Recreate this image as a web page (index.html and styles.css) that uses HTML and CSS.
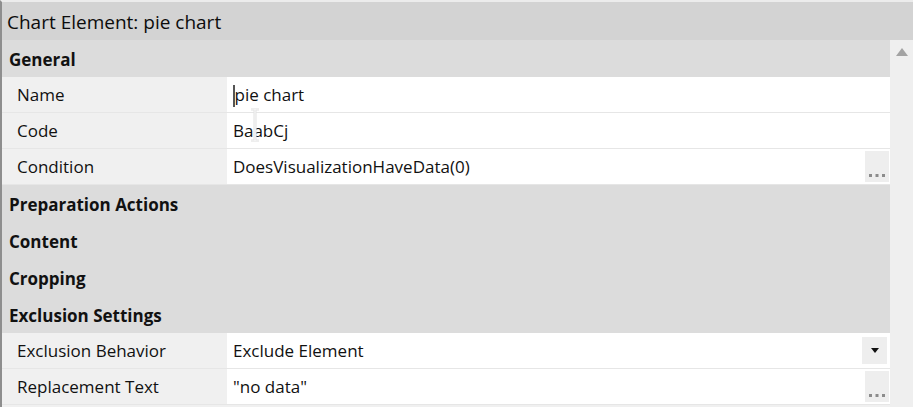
FILE: index.html
```html
<!DOCTYPE html>
<html lang="en">
<head>
    <meta charset="UTF-8">
    <title>Chart Element: pie chart</title>
    <link rel="stylesheet" href="styles.css">
</head>
<body>
    <div class="panel">
        <div class="title">Chart Element: pie chart</div>
        <div class="body">
            <div class="grid">
                <div class="section">General</div>
                <div class="row">
                    <div class="label">Name</div>
                    <div class="value"><span class="caret"></span>pie chart</div>
                </div>
                <div class="row">
                    <div class="label">Code</div>
                    <div class="value">BaabCj
                        <!-- mouse I-beam over the text -->
                        <svg class="ibeam" width="12" height="34" viewBox="0 0 12 34">
                            <path d="M2 1h8M2 33h8M6 1v32" stroke="#e2e2e2" stroke-width="3" fill="none"/>
                            <path d="M2 1h8M2 33h8M6 1v32" stroke="#fafafa" stroke-width="1" fill="none"/>
                        </svg>
                    </div>
                </div>
                <div class="row">
                    <div class="label">Condition</div>
                    <div class="value">DoesVisualizationHaveData(0)
                        <span class="btn-dots">
                            <svg width="18" height="4" viewBox="0 0 18 4">
                                <rect x="1" y="1" width="3" height="3" fill="#8c8c8c"/>
                                <rect x="7.5" y="1" width="3" height="3" fill="#8c8c8c"/>
                                <rect x="14" y="1" width="3" height="3" fill="#8c8c8c"/>
                            </svg>
                        </span>
                    </div>
                </div>
                <div class="section">Preparation Actions</div>
                <div class="section">Content</div>
                <div class="section">Cropping</div>
                <div class="section">Exclusion Settings</div>
                <div class="row">
                    <div class="label">Exclusion Behavior</div>
                    <div class="value">Exclude Element
                        <span class="btn-drop">
                            <svg width="8" height="5" viewBox="0 0 8 5">
                                <path d="M0 0h8L4 5z" fill="#111"/>
                            </svg>
                        </span>
                    </div>
                </div>
                <div class="row">
                    <div class="label">Replacement Text</div>
                    <div class="value">"no data"
                        <span class="btn-dots">
                            <svg width="18" height="4" viewBox="0 0 18 4">
                                <rect x="1" y="1" width="3" height="3" fill="#8c8c8c"/>
                                <rect x="7.5" y="1" width="3" height="3" fill="#8c8c8c"/>
                                <rect x="14" y="1" width="3" height="3" fill="#8c8c8c"/>
                            </svg>
                        </span>
                    </div>
                </div>
            </div>
            <div class="scrollbar">
                <svg class="arrow-up" width="12" height="8" viewBox="0 0 12 8">
                    <path d="M0 8L6 0l6 8z" fill="#a3a3a3"/>
                </svg>
            </div>
        </div>
    </div>
</body>
</html>
```

FILE: styles.css
```css
body {
    margin: 0;
    font-family: 'Open Sans', 'Noto Sans', sans-serif;
    font-size: 17px;
    color: #111;
    background: #f0f0f0;
    overflow: hidden;
}

.panel {
    border-top: 2px solid #ececec;
    border-left: 2px solid #8e8e8e;
    height: 405px;
}

.title {
    height: 36px;
    line-height: 36px;
    padding: 2px 0 0 5px;
    background-color: #d3d3d3;
    font-size: 19px;
    color: #0c0c0c;
}

.body {
    display: flex;
}

.grid {
    width: 888px;
}

.scrollbar {
    flex: 1;
    background-color: #efefef;
    height: 367px;
    display: flex;
    justify-content: center;
    padding-top: 8px;
    box-sizing: border-box;
}

.section {
    height: 35px;
    line-height: 35px;
    padding: 2px 0 0 7px;
    background-color: #dcdcdc;
    font-weight: bold;
}

.row {
    display: grid;
    grid-template-columns: 225px 1fr;
    height: 35px;
    border-bottom: 1px solid #e6e6e6;
}

.label {
    background-color: #f0f0f0;
    padding: 1px 0 0 15px;
    line-height: 34px;
}

.value {
    background-color: #fff;
    padding: 1px 0 0 6px;
    line-height: 34px;
    position: relative;
}

.caret {
    display: inline-block;
    width: 1.5px;
    height: 22px;
    background-color: #555;
    vertical-align: -6px;
}

.ibeam {
    position: absolute;
    left: 22px;
    top: -5px;
}

.btn-dots {
    position: absolute;
    right: 1px;
    top: 2px;
    width: 24px;
    height: 31px;
    background-color: #eeeeee;
    display: flex;
    align-items: flex-end;
    justify-content: center;
    padding-bottom: 5px;
    box-sizing: border-box;
}

.btn-drop {
    position: absolute;
    right: 3px;
    top: 4px;
    width: 25px;
    height: 27px;
    background-color: #eeeeee;
    display: flex;
    align-items: center;
    justify-content: center;
}
```
